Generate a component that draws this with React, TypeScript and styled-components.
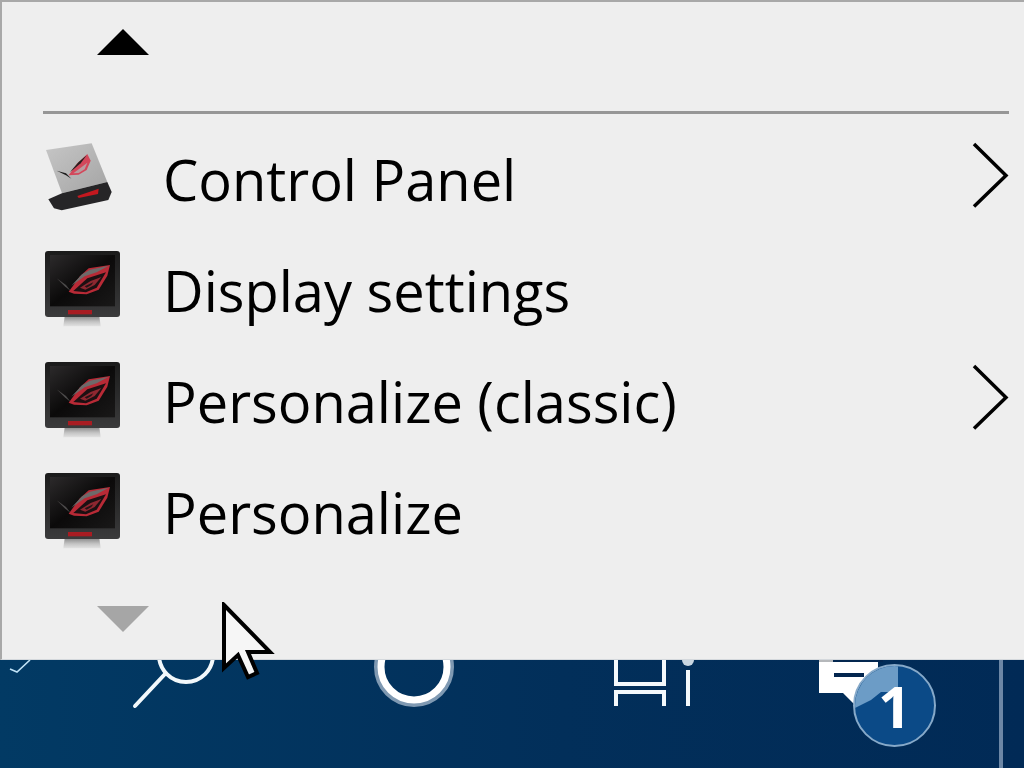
import React from 'react'
import styled, { createGlobalStyle } from 'styled-components'

const GlobalStyle = createGlobalStyle`
  html, body {
    margin: 0;
    padding: 0;
    background: #03305c;
    overflow: hidden;
  }
`

function StandIcon() {
  return (
    <IconSvg viewBox="39 21 240 270">
      <defs>
        <linearGradient id="plate" x1="0" y1="0" x2="1" y2="1">
          <stop offset="0" stopColor="#c6c6c6" />
          <stop offset="1" stopColor="#a4a4a4" />
        </linearGradient>
      </defs>
      <path d="M48 60 L185 40 L232 156 L96 190 Z" fill="url(#plate)" />
      <path d="M80 122 L108 130 L124 146 L108 136 Z" fill="#1c1c1c" />
      <path d="M116 136 L142 100 L172 72 L182 92 L170 120 L146 134 Z" fill="#d3475a" />
      <path d="M120 126 L146 96 L170 76 L152 100 L128 120 Z" fill="#26201f" />
      <path d="M130 130 L172 98 L164 118 L146 129 Z" fill="#b99a9e" />
      <path d="M55 208 L96 190 L232 156 L245 186 L235 210 L95 241 L72 235 Z" fill="#262527" />
      <path d="M142 198 L206 176 L204 192 L146 204 Z" fill="#c4181f" />
    </IconSvg>
  )
}

function MonitorIcon() {
  return (
    <IconSvg viewBox="39 21 240 270">
      <defs>
        <linearGradient id="stand" x1="0" y1="0" x2="0" y2="1">
          <stop offset="0" stopColor="#8a8a8a" />
          <stop offset="0.55" stopColor="#c4c4c4" />
          <stop offset="1" stopColor="#e2e2e2" />
        </linearGradient>
        <linearGradient id="screen" x1="0" y1="0" x2="1" y2="1">
          <stop offset="0" stopColor="#2c2a2b" />
          <stop offset="0.5" stopColor="#0b0a0a" />
          <stop offset="1" stopColor="#191818" />
        </linearGradient>
        <linearGradient id="chin" x1="0" y1="0" x2="0" y2="1">
          <stop offset="0" stopColor="#1b1b1b" />
          <stop offset="1" stopColor="#3a3a3b" />
        </linearGradient>
      </defs>
      <path d="M104 226 L208 226 L212 256 L100 256 Z" fill="url(#stand)" />
      <rect x="45" y="30" width="225" height="198" rx="9" fill="url(#chin)" />
      <rect x="60" y="42" width="195" height="154" fill="url(#screen)" />
      <rect x="114" y="207" width="72" height="13" fill="#a81c22" />
      <path d="M80 112 L108 132 L122 150 L104 136 Z" fill="#4c4a4a" />
      <path d="M116 152 L150 106 L176 82 L240 72 L232 104 L206 146 L170 160 L132 158 Z" fill="#b82a36" />
      <path d="M124 134 L156 100 L180 86 L236 74 L200 94 L164 106 Z" fill="#6e6a6a" />
      <path d="M130 150 L172 112 L228 94 L200 140 L168 154 Z" fill="#1c1012" />
      <path d="M150 140 L182 120 L214 108 L194 132 L166 146 Z" fill="#8e2730" />
      <path d="M164 136 L190 124 L184 132 L170 140 Z" fill="#241416" />
    </IconSvg>
  )
}

function Chevron() {
  return (
    <ChevronSvg viewBox="0 0 37 111">
      <path d="M2 18 L34 49.5 L2 80.5" />
    </ChevronSvg>
  )
}

const menuItems = [
  { label: 'Control Panel', icon: 'stand', more: true },
  { label: 'Display settings', icon: 'monitor', more: false },
  { label: 'Personalize (classic)', icon: 'monitor', more: true },
  { label: 'Personalize', icon: 'monitor', more: false },
]

function App() {
  return (
    <Page>
      <GlobalStyle />
      <Menu>
        <ScrollZone $height={109}>
          <ArrowUp />
        </ScrollZone>
        <Separator />
        <MenuList>
          {menuItems.map((item) => (
            <MenuRow key={item.label}>
              {item.icon === 'stand' ? <StandIcon /> : <MonitorIcon />}
              <MenuLabel>{item.label}</MenuLabel>
              {item.more && <Chevron />}
            </MenuRow>
          ))}
        </MenuList>
        <ScrollZone $height={90}>
          <ArrowDown />
        </ScrollZone>
      </Menu>
      <Taskbar>
        <TrayCheck viewBox="0 0 24 14">
          <path d="M2 9 L9 12 L22 0" />
        </TrayCheck>
        <SearchIcon viewBox="0 0 90 50">
          <circle cx="56" cy="-5" r="27" />
          <path d="M35 14 L5 46" />
        </SearchIcon>
        <CortanaIcon viewBox="0 0 80 50">
          <circle className="halo" cx="40" cy="7" r="37" />
          <circle className="ring" cx="40" cy="7" r="33" />
        </CortanaIcon>
        <TaskViewIcon viewBox="0 0 80 50">
          <path d="M2 0 V24 H50 V0 M2 46 V32 H50 V46" />
          <path d="M74 10 V46" />
          <circle cx="74" cy="0" r="6" />
        </TaskViewIcon>
        <Notification>
          <NotificationSvg viewBox="0 0 120 50">
            <path d="M1 0 H60 V45 H37 L25 33 H1 Z" fill="#ffffff" />
            <rect x="1" y="0" width="14" height="2" fill="#b5b8bb" />
            <rect x="15" y="0" width="50" height="2" fill="#03264f" />
            <rect x="16" y="13" width="30" height="4" fill="#03264f" />
          </NotificationSvg>
          <Badge>
            <BadgeGlare viewBox="0 0 83 83">
              <path d="M0 0 H45 V28 L28 28 L18 36 L2 44 Z" />
            </BadgeGlare>
            <BadgeCount>1</BadgeCount>
          </Badge>
        </Notification>
        <TrayDivider />
      </Taskbar>
      <Cursor viewBox="0 0 56 80">
        <path d="M3 3 L49 50 L27 50 L36 71 L27 75 L17 53 L3 66 Z" />
      </Cursor>
    </Page>
  )
}

export default App

const Page = styled.div`
  position: relative;
  width: 1024px;
  height: 768px;
  overflow: hidden;
  display: flex;
  flex-direction: column;
  font-family: 'Open Sans', 'Noto Sans', sans-serif;
`

const Menu = styled.div`
  box-sizing: border-box;
  width: 1024px;
  height: 660px;
  flex: none;
  background: #eeeeee;
  border-top: 2px solid #a8a8a8;
  border-left: 2px solid #a8a8a8;
  border-bottom: 1px solid #d4d8dc;
  padding: 0 15px 0 41px;
  display: flex;
  flex-direction: column;
`

const ScrollZone = styled.div<{ $height: number }>`
  height: ${(p) => p.$height}px;
  flex: none;
  display: flex;
  align-items: center;
  padding-left: 54px;
`

const ArrowUp = styled.div`
  width: 0;
  height: 0;
  margin-top: -29px;
  border-left: 26px solid transparent;
  border-right: 26px solid transparent;
  border-bottom: 26px solid #000000;
`

const ArrowDown = styled.div`
  width: 0;
  height: 0;
  margin-top: 7px;
  border-left: 26px solid transparent;
  border-right: 26px solid transparent;
  border-top: 26px solid #a6a6a6;
`

const Separator = styled.div`
  height: 3px;
  flex: none;
  background: #969696;
`

const MenuList = styled.div`
  margin-top: 12px;
  display: flex;
  flex-direction: column;
`

const MenuRow = styled.div`
  height: 111px;
  display: flex;
  align-items: center;
`

const IconSvg = styled.svg`
  width: 80px;
  height: 90px;
  flex: none;
  filter: blur(0.4px);
`

const MenuLabel = styled.span`
  flex: 1;
  margin-left: 40px;
  padding-bottom: 5px;
  font-size: 56px;
  line-height: 106px;
  color: #000000;
  white-space: nowrap;
`

const ChevronSvg = styled.svg`
  width: 37px;
  height: 111px;
  flex: none;
  fill: none;
  stroke: #000000;
  stroke-width: 3.5;
`

const Taskbar = styled.div`
  flex: 1;
  position: relative;
  display: flex;
  align-items: flex-start;
  padding-left: 8px;
  background: linear-gradient(to right, #023a64, #022f5a 55%, #012a56);
`

const TrayCheck = styled.svg`
  width: 24px;
  height: 14px;
  flex: none;
  fill: none;
  stroke: #bfe2f6;
  stroke-width: 1.6;
`

const SearchIcon = styled.svg`
  width: 90px;
  height: 50px;
  flex: none;
  margin-left: 98px;
  fill: none;
  stroke: #f2f8fb;
  stroke-width: 4;
  stroke-linecap: round;
`

const CortanaIcon = styled.svg`
  width: 80px;
  height: 50px;
  flex: none;
  margin-left: 154px;
  fill: none;
  .halo {
    stroke: #7f99b2;
    stroke-width: 6;
  }
  .ring {
    stroke: #ffffff;
    stroke-width: 7;
  }
`

const TaskViewIcon = styled.svg`
  width: 80px;
  height: 50px;
  flex: none;
  margin-left: 160px;
  fill: none;
  stroke: #f4f9fc;
  stroke-width: 4;
  circle {
    fill: #c9d6e1;
    stroke: none;
  }
`

const Notification = styled.div`
  position: relative;
  width: 120px;
  height: 90px;
  flex: none;
  margin-left: 124px;
`

const NotificationSvg = styled.svg`
  display: block;
  width: 120px;
  height: 50px;
`

const Badge = styled.div`
  box-sizing: border-box;
  position: absolute;
  left: 35px;
  top: 4px;
  width: 83px;
  height: 83px;
  border-radius: 50%;
  overflow: hidden;
  background: #0b4a87;
  border: 2px solid #86a9c9;
  display: flex;
  align-items: center;
  justify-content: center;
`

const BadgeGlare = styled.svg`
  position: absolute;
  left: -2px;
  top: -2px;
  width: 83px;
  height: 83px;
  fill: #6c9cc6;
`

const BadgeCount = styled.span`
  position: relative;
  font-family: 'Open Sans', sans-serif;
  font-size: 58px;
  font-weight: 700;
  line-height: 1;
  color: #ffffff;
`

const TrayDivider = styled.div`
  width: 4px;
  height: 108px;
  flex: none;
  margin-left: 61px;
  background: #6c87a6;
`

const Cursor = styled.svg`
  position: absolute;
  left: 221px;
  top: 602px;
  width: 56px;
  height: 80px;
  fill: #f6f6f6;
  stroke: #000000;
  stroke-width: 4;
`
